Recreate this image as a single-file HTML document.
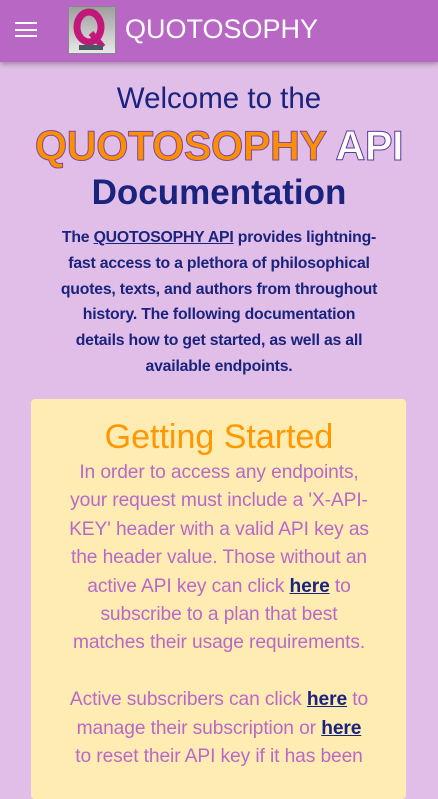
<!DOCTYPE html>
<html><head><style>
*{margin:0;padding:0;box-sizing:border-box}
body{width:438px;height:778px;overflow:hidden;background:#e1bee7;font-family:"Liberation Sans",sans-serif;position:relative}
.hdr{position:absolute;left:0;top:0;width:438px;height:62px;background:#b868c4;box-shadow:0 2px 5px rgba(0,0,0,.3);z-index:2}
.ham{position:absolute;left:15px;top:22px;width:22px;height:16px}
.ham i{display:block;height:2px;background:#fff;margin-bottom:4.5px}
.logo{position:absolute;left:68px;top:6px;width:48px;height:48px;background:linear-gradient(#9e9e9e,#e8e8e8);border:1px solid #888}
.ttl{position:absolute;left:125px;top:14px;color:#fff;font-size:27px;white-space:nowrap}
.c{position:absolute;left:0;width:438px;text-align:center;white-space:nowrap}
.navy{color:#1a237e}
.card{position:absolute;left:31px;top:399px;width:375px;height:400px;background:#ffecb3;border-radius:4px}
.p{color:#1a237e;font-size:15.8px;font-weight:bold;line-height:25.8px;letter-spacing:-0.2px}
.q{color:#ba68c8;font-size:19.2px;line-height:28.4px;letter-spacing:-0.1px}
.q b{color:#1a237e;text-decoration:underline}
</style></head><body>
<div class="hdr">
<div class="ham"><i></i><i></i><i></i></div>
<div class="logo"><svg width="46" height="46" viewBox="0 0 46 46"><ellipse cx="20" cy="20" rx="12" ry="15" fill="none" stroke="#c2187a" stroke-width="7"/><path d="M22 26 L34 40" stroke="#c2187a" stroke-width="6"/><rect x="10" y="38" width="24" height="5" fill="#455a64"/></svg></div>
<div class="ttl">QUOTOSOPHY</div>
</div>
<div class="c navy" style="top:82px;font-size:29.5px">Welcome to the</div>
<div class="c" style="top:122px;font-size:41.5px;font-weight:bold;letter-spacing:-0.5px"><span style="color:#ff8f00;-webkit-text-stroke:1px #7b4ca0">QUOTOSOPHY</span> <span style="color:#fff;-webkit-text-stroke:1px #5c3c9a">API</span></div>
<div class="c navy" style="top:173px;font-size:35px;font-weight:bold">Documentation</div>
<div class="c p" style="top:225px">The <u>QUOTOSOPHY API</u> provides lightning-<br>fast access to a plethora of philosophical<br>quotes, texts, and authors from throughout<br>history. The following documentation<br>details how to get started, as well as all<br>available endpoints.</div>
<div class="card"></div>
<div class="c" style="top:418px;font-size:34px;color:#ff9800">Getting Started</div>
<div class="c q" style="top:459px">In order to access any endpoints,<br>your request must include a 'X-API-<br>KEY' header with a valid API key as<br>the header value. Those without an<br>active API key can click <b>here</b> to<br>subscribe to a plan that best<br>matches their usage requirements.<br><br>Active subscribers can click <b>here</b> to<br>manage their subscription or <b>here</b><br>to reset their API key if it has been</div>
</body></html>
